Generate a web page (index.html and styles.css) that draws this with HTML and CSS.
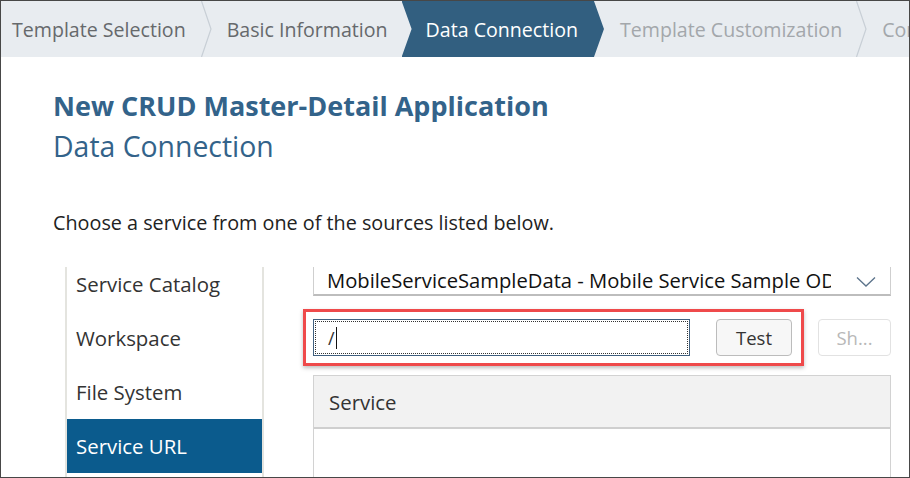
FILE: index.html
```html
<!DOCTYPE html>
<html lang="en">
<head>
<meta charset="utf-8">
<title>New CRUD Master-Detail Application</title>
<link rel="stylesheet" href="styles.css">
</head>
<body>
<div class="frame">
  <nav class="steps">
    <div class="step done first">Template Selection</div>
    <svg class="sep" width="11" height="56" viewBox="0 0 11 56"><polyline points="0.5,0 10,28 0.5,56" fill="none" stroke="#c8cfd6" stroke-width="1.2"/></svg>
    <div class="step done second">Basic Information</div>
    <div class="step active">Data Connection</div>
    <div class="step todo fourth">Template Customization</div>
    <svg class="sep" width="11" height="56" viewBox="0 0 11 56"><polyline points="0.5,0 10,28 0.5,56" fill="none" stroke="#c8cfd6" stroke-width="1.2"/></svg>
    <div class="step todo last">Confirmation</div>
  </nav>
  <main class="main">
    <h1 class="title">New CRUD Master-Detail Application</h1>
    <h2 class="subtitle">Data Connection</h2>
    <p class="intro">Choose a service from one of the sources listed below.</p>
    <div class="scroller">
      <div class="content">
        <ul class="sources">
          <li class="source">Service Catalog</li>
          <li class="source">Workspace</li>
          <li class="source">File System</li>
          <li class="source selected">Service URL</li>
        </ul>
        <div class="detail">
          <div class="select">
            <span class="select-text">MobileServiceSampleData - Mobile Service Sample OData</span>
            <svg class="select-arrow" width="20" height="12" viewBox="0 0 20 12"><polyline points="1,1.5 10,10 19,1.5" fill="none" stroke="#5b738b" stroke-width="1.3"/></svg>
          </div>
          <div class="url-row">
            <div class="highlight">
              <div class="input"><span class="input-text">/</span><span class="caret"></span></div>
              <button class="btn">Test</button>
            </div>
            <button class="btn disabled">Sh...</button>
          </div>
          <div class="table">
            <div class="thead">Service</div>
            <div class="tbody"></div>
          </div>
        </div>
      </div>
    </div>
  </main>
</div>
</body>
</html>
```
FILE: styles.css
```css
* { box-sizing: border-box; }
html, body { margin: 0; padding: 0; }
body {
  width: 910px;
  height: 478px;
  overflow: hidden;
  background: #fff;
  font-family: "Open Sans", "Noto Sans", sans-serif;
}
.frame {
  width: 910px;
  height: 478px;
  border: 1px solid #474747;
  overflow: hidden;
  display: flex;
  flex-direction: column;
}
.steps {
  flex: none;
  height: 56px;
  background: #e8ecf0;
  display: flex;
  align-items: stretch;
  white-space: nowrap;
  overflow: hidden;
  font-size: 19.6px;
}
.step {
  display: flex;
  align-items: center;
  flex: none;
  padding-top: 1px;
}
.sep { flex: none; display: block; }
.done { color: #66696c; }
.todo { color: #a3a7ab; }
.first { padding-left: 11px; padding-right: 15px; }
.second { padding-left: 15px; padding-right: 14px; }
.active {
  color: #fff;
  background: #325f80;
  padding-left: 24px;
  padding-right: 26px;
  clip-path: polygon(0 0, calc(100% - 10px) 0, 100% 50%, calc(100% - 10px) 100%, 0 100%, 10px 50%);
}
.fourth { padding-left: 16px; padding-right: 14px; }
.last { padding-left: 15px; }

.main {
  flex: 1;
  min-height: 0;
  padding-left: 52px;
  display: flex;
  flex-direction: column;
}
.title {
  margin: 33px 0 0;
  font-size: 27px;
  line-height: 32px;
  font-weight: 700;
  color: #33638a;
}
.subtitle {
  margin: 7px 0 0;
  font-size: 28.4px;
  line-height: 34px;
  font-weight: 400;
  color: #33638a;
}
.intro {
  margin: 47px 0 0;
  font-size: 19.8px;
  line-height: 26px;
  color: #222;
}
.scroller {
  margin-top: 31px;
  flex: 1;
  min-height: 0;
  overflow: hidden;
}
.content {
  margin-top: -10px;
  display: flex;
  align-items: flex-start;
  gap: 49px;
  padding-left: 12px;
}
.sources {
  list-style: none;
  margin: 0;
  padding: 0;
  width: 199px;
  border-left: 2px solid #e4e4df;
  border-right: 2px solid #e4e4df;
  flex: none;
  height: 260px;
}
.source {
  height: 54px;
  display: flex;
  align-items: center;
  padding-left: 9px;
  padding-top: 0;
  font-size: 20.4px;
  color: #333;
}
.source.selected {
  background: #0b5b8d;
  color: #fff;
}
.detail {
  width: 578px;
  flex: none;
  display: flex;
  flex-direction: column;
}
.select {
  height: 39px;
  border: 1px solid #cfcfcf;
  border-bottom: 2px solid #bdbdbd;
  display: flex;
  align-items: center;
  padding: 8px 14px 0 13px;
  font-size: 20.2px;
  color: #111;
}
.select-text {
  width: 504px;
  overflow: hidden;
  white-space: nowrap;
}
.select-arrow { margin-left: auto; display: block; margin-top: 4px; }
.url-row {
  margin-top: 13px;
  display: flex;
  align-items: center;
  margin-left: -10px;
}
.highlight {
  display: flex;
  align-items: center;
  border: 3px solid #ef4a4b;
  padding: 7px 9px 7px 7px;
  box-shadow: 0 2px 4px rgba(0,0,0,0.25);
  gap: 26px;
}
.input {
  width: 377px;
  height: 37px;
  border: 1px solid #40607f;
  outline: 1px dotted #333;
  outline-offset: -3px;
  display: flex;
  align-items: center;
  padding-left: 14px;
  font-size: 18px;
  color: #333;
  background: #fff;
}
.caret {
  display: inline-block;
  width: 1px;
  height: 22px;
  background: #111;
  margin-left: 1px;
}
.btn {
  height: 37px;
  width: 76px;
  border: 1px solid #bcbcbc;
  border-radius: 4px;
  background: #f7f7f7;
  font-family: inherit;
  font-size: 18.5px;
  color: #333;
  padding: 0;
}
.btn.disabled {
  margin-left: 14px;
  width: 73px;
  color: #b8b8b8;
  border-color: #e2e2e2;
  background: #fff;
}
.table {
  margin-top: 9px;
  border: 1px solid #d2d2d2;
  border-bottom: none;
}
.thead {
  height: 53px;
  background: #f2f2f2;
  border-bottom: 2px solid #cfcfcf;
  display: flex;
  align-items: center;
  padding-left: 15px;
  font-size: 20.4px;
  color: #333;
}
.tbody { height: 60px; background: #fff; }
```
